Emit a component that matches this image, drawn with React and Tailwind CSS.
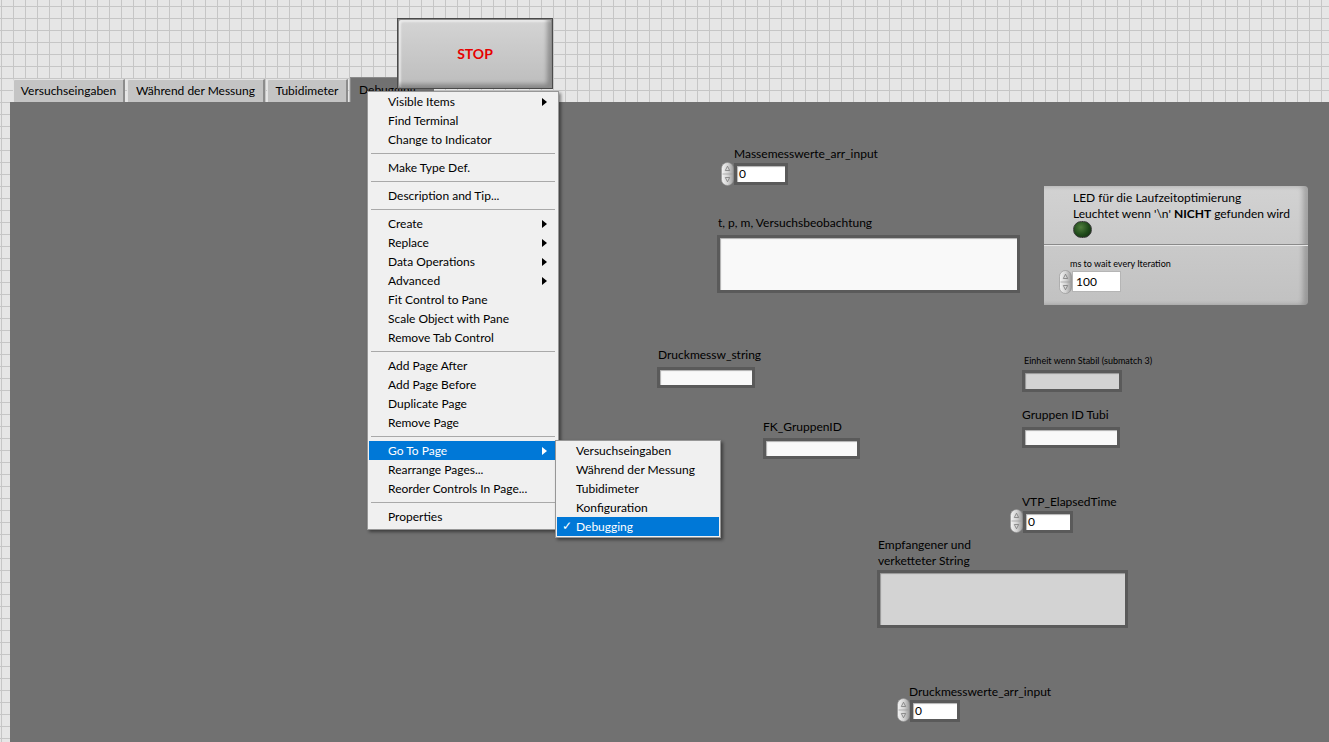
import React from "react";

function Spinner() {
  return (
    <svg width="13" height="24" viewBox="0 0 13 24" className="block shrink-0">
      <defs>
        <linearGradient id="spin" x1="0" x2="1" y1="0" y2="0">
          <stop offset="0" stopColor="#f4f4f4" />
          <stop offset="0.55" stopColor="#d2d2d2" />
          <stop offset="1" stopColor="#9a9a9a" />
        </linearGradient>
      </defs>
      <rect x="0.5" y="0.5" width="12" height="23" rx="6" fill="url(#spin)" stroke="#8e8e8e" strokeWidth="0.6" />
      <line x1="1.5" y1="12" x2="11.5" y2="12" stroke="#9a9a9a" strokeWidth="0.7" />
      <path d="M4.3 8.5 L6.5 4.2 L8.7 8.5 Z" fill="none" stroke="#7a7a7a" strokeWidth="0.8" />
      <path d="M4.3 15.5 L6.5 19.8 L8.7 15.5 Z" fill="none" stroke="#7a7a7a" strokeWidth="0.8" />
    </svg>
  );
}

function Arrow({ white }) {
  return (
    <svg width="5" height="8" viewBox="0 0 5 8" className="block">
      <path d="M0 0 L5 4 L0 8 Z" fill={white ? "#ffffff" : "#000000"} />
    </svg>
  );
}

function MenuItem({ label, sub, active, check }) {
  return (
    <div
      className={
        "h-[19px] flex items-center pl-[19px] pr-[10px] relative " +
        (active ? "bg-[#0078d7] text-white" : "text-black")
      }
    >
      {check && <span className="absolute left-[5px] top-[1px] text-[12px]">✓</span>}
      <span className="flex-1">{label}</span>
      {sub && <Arrow white={active} />}
    </div>
  );
}

function Sep() {
  return (
    <div className="h-[9px] flex items-center px-[2px]">
      <div className="h-px w-full bg-[#a9a9a9]" />
    </div>
  );
}

// sunken LabVIEW string/numeric frame
function Box({ className, fill, children }) {
  return (
    <div className={"bg-[#5a5a5a] p-[3px] " + className}>
      <div className={"h-full pl-[2px] leading-[16px] shadow-[inset_1px_1px_1px_rgba(0,0,0,0.3)] " + fill}>{children}</div>
    </div>
  );
}

export default function App() {
  return (
    <div className="relative w-[1329px] h-[742px] overflow-hidden flex flex-col pt-[77px] pl-[10px] text-[12px] leading-[16px] text-black font-[Lato,'Liberation_Sans',sans-serif] bg-[#e6e6e6] bg-[linear-gradient(to_right,#c6c6c6_1px,transparent_1px),linear-gradient(to_bottom,#c6c6c6_1px,transparent_1px)] bg-[size:12px_12px] bg-[position:1px_6px]">
      {/* Tabs */}
      <div className="flex items-end h-[25px] pl-[3px] gap-[2px]">
        <div className="w-[112px] h-[23px] flex items-center justify-center bg-[#c4c4c4] border-t border-l border-[#e4e4e4] border-r-2 border-r-[#8c8c8c] rounded-tl-[2px]">
          Versuchseingaben
        </div>
        <div className="w-[138px] h-[23px] flex items-center justify-center bg-[#c4c4c4] border-t border-l border-[#e4e4e4] border-r-2 border-r-[#8c8c8c] rounded-tl-[2px]">
          Während der Messung
        </div>
        <div className="w-[81px] h-[23px] flex items-center justify-center bg-[#c4c4c4] border-t border-l border-[#e4e4e4] border-r-2 border-r-[#8c8c8c] rounded-tl-[2px]">
          Tubidimeter
        </div>
        <div className="w-[84px] h-[25px] flex items-center pl-[8px] bg-[#717171] border-t border-l border-[#8a8a8a]">
          Debugging
        </div>
      </div>

      {/* Tab panel: LabVIEW front panel, controls sit on a free canvas */}
      <div className="relative flex-1 bg-[#717171]">
        <div className="absolute left-[711px] top-[44px] flex flex-col">
          <div className="ml-[13px]">Massemesswerte_arr_input</div>
          <div className="flex items-start">
            <Spinner />
            <Box className="mt-[1px] w-[54px] h-[22px]" fill="bg-white">0</Box>
          </div>
        </div>

        <div className="absolute left-[707px] top-[113px] flex flex-col gap-[4px]">
          <div className="ml-[1px]">t, p, m, Versuchsbeobachtung</div>
          <Box className="w-[303px] h-[58px]" fill="bg-[#f9f9f9]" />
        </div>

        {/* LED panel */}
        <div className="absolute left-[1034px] top-[84px] w-[264px] h-[119px] flex flex-col rounded-tr-[4px] rounded-br-[4px] shadow-[inset_-5px_0_5px_rgba(0,0,0,0.22)] bg-[linear-gradient(to_bottom,#d2d2d2,#c1c1c1)]">
          <div className="h-[59px] pl-[29px] pt-[4px] border-b border-[#8a8a8a]">
            <div>LED für die Laufzeitoptimierung</div>
            <div>
              Leuchtet wenn '\n' <b className="font-bold">NICHT</b> gefunden wird
            </div>
            <div className="mt-[-1px] w-[19px] h-[17px] rounded-full border border-[#3a3a3a] bg-[radial-gradient(circle_at_40%_35%,#4f7d3c,#1f4a1a_55%,#0f250d)]" />
          </div>
          <div className="flex-1 border-t border-[#e8e8e8] pl-[26px] pt-[12px]">
            <div className="text-[9px] leading-[12px]">ms to wait every Iteration</div>
            <div className="flex items-start ml-[-11px]">
              <Spinner />
              <div className="mt-[1px] w-[49px] h-[21px] bg-white border border-[#b5b5b5] pl-[3px] leading-[19px]">100</div>
            </div>
          </div>
        </div>

        <div className="absolute left-[647px] top-[245px] flex flex-col gap-[4px]">
          <div className="ml-[1px]">Druckmessw_string</div>
          <Box className="w-[98px] h-[21px]" fill="bg-[#f9f9f9]" />
        </div>

        <div className="absolute left-[753px] top-[317px] flex flex-col gap-[3px]">
          <div>FK_GruppenID</div>
          <Box className="w-[97px] h-[21px]" fill="bg-[#f9f9f9]" />
        </div>

        <div className="absolute left-[1012px] top-[253px] flex flex-col gap-[3px]">
          <div className="ml-[2px] text-[9px] leading-[12px]">Einheit wenn Stabil (submatch 3)</div>
          <Box className="w-[100px] h-[22px]" fill="bg-[#d3d3d3]" />
        </div>

        <div className="absolute left-[1012px] top-[305px] flex flex-col gap-[4px]">
          <div>Gruppen ID Tubi</div>
          <Box className="w-[98px] h-[21px]" fill="bg-[#f9f9f9]" />
        </div>

        <div className="absolute left-[1000px] top-[392px] flex flex-col">
          <div className="ml-[12px]">VTP_ElapsedTime</div>
          <div className="flex items-start mt-[-1px]">
            <Spinner />
            <Box className="mt-[2px] w-[50px] h-[22px]" fill="bg-white">0</Box>
          </div>
        </div>

        <div className="absolute left-[867px] top-[435px] flex flex-col gap-[1px]">
          <div className="ml-[1px]">
            Empfangener und
            <br />
            verketteter String
          </div>
          <Box className="w-[251px] h-[58px]" fill="bg-[#d3d3d3]" />
        </div>

        <div className="absolute left-[887px] top-[582px] flex flex-col">
          <div className="ml-[12px]">Druckmesswerte_arr_input</div>
          <div className="flex items-start mt-[-2px]">
            <Spinner />
            <Box className="mt-[2px] w-[50px] h-[22px]" fill="bg-white">0</Box>
          </div>
        </div>
      </div>

      {/* STOP button */}
      <div className="absolute left-[397px] top-[18px] w-[156px] h-[71px] p-[1px] bg-[#8a8a8a] border border-[#4a4a4a]">
        <div className="h-full flex items-center justify-center rounded-[2px] bg-[linear-gradient(to_bottom,#d4d4d4,#bdbdbd)] shadow-[inset_-4px_-3px_4px_rgba(0,0,0,0.28),inset_2px_2px_2px_rgba(255,255,255,0.55)]">
          <span className="text-[#e60000] font-bold text-[14px]">STOP</span>
        </div>
      </div>

      {/* Context menu */}
      <div className="absolute left-[367px] top-[91px] w-[192px] bg-[#f0f0f0] border border-[#979797] px-[1px] pb-[3px] shadow-[2px_2px_3px_rgba(0,0,0,0.45)]">
        <MenuItem label="Visible Items" sub />
        <MenuItem label="Find Terminal" />
        <MenuItem label="Change to Indicator" />
        <Sep />
        <MenuItem label="Make Type Def." />
        <Sep />
        <MenuItem label="Description and Tip..." />
        <Sep />
        <MenuItem label="Create" sub />
        <MenuItem label="Replace" sub />
        <MenuItem label="Data Operations" sub />
        <MenuItem label="Advanced" sub />
        <MenuItem label="Fit Control to Pane" />
        <MenuItem label="Scale Object with Pane" />
        <MenuItem label="Remove Tab Control" />
        <Sep />
        <MenuItem label="Add Page After" />
        <MenuItem label="Add Page Before" />
        <MenuItem label="Duplicate Page" />
        <MenuItem label="Remove Page" />
        <Sep />
        <MenuItem label="Go To Page" sub active />
        <MenuItem label="Rearrange Pages..." />
        <MenuItem label="Reorder Controls In Page..." />
        <Sep />
        <MenuItem label="Properties" />
      </div>

      {/* Go To Page submenu */}
      <div className="absolute left-[555px] top-[440px] w-[166px] bg-[#f0f0f0] border border-[#979797] px-[1px] pb-[1px] shadow-[2px_2px_3px_rgba(0,0,0,0.45)]">
        <MenuItem label="Versuchseingaben" />
        <MenuItem label="Während der Messung" />
        <MenuItem label="Tubidimeter" />
        <MenuItem label="Konfiguration" />
        <MenuItem label="Debugging" active check />
      </div>
    </div>
  );
}
